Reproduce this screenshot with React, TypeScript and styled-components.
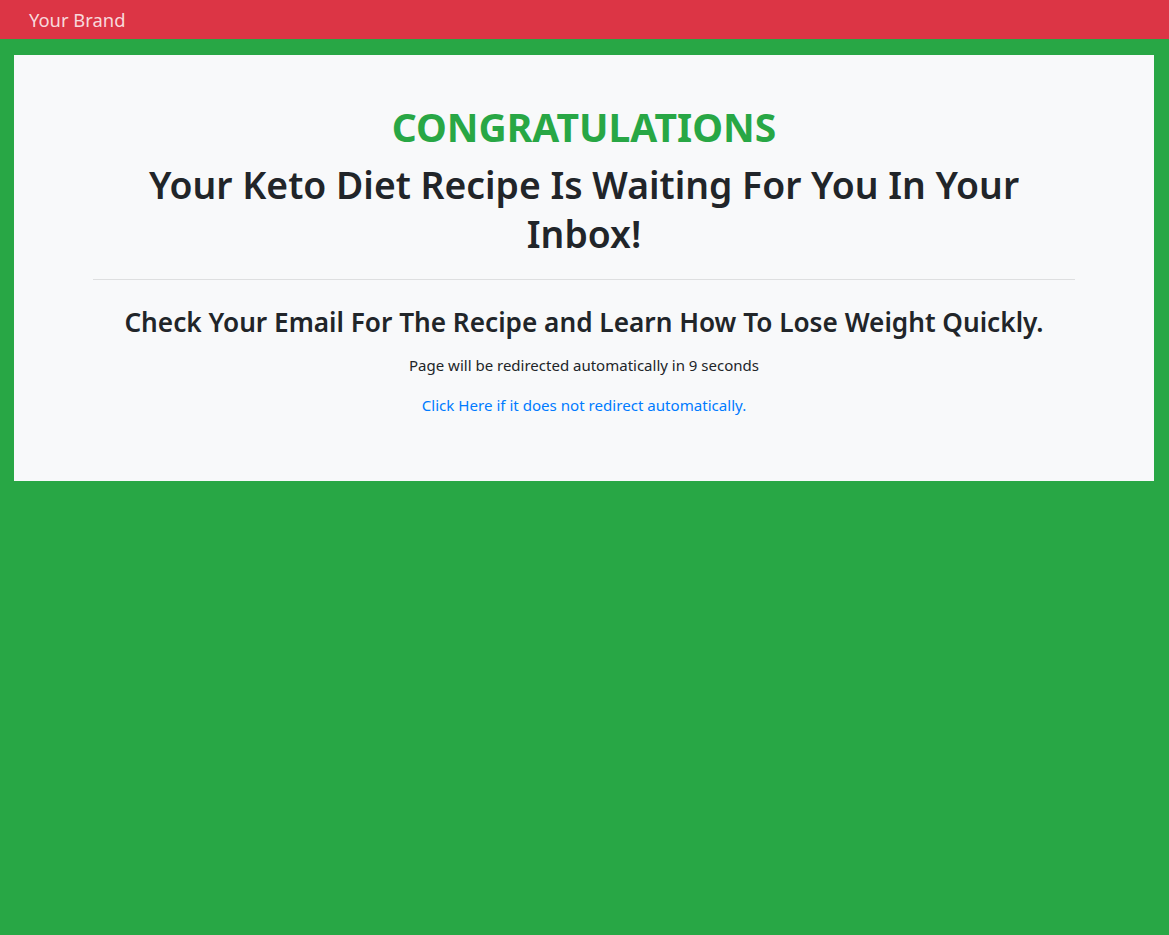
import React from "react";
import styled, { createGlobalStyle } from "styled-components";

const Global = createGlobalStyle`
  html, body { margin: 0; padding: 0; }
  body {
    background: #28a745;
    font-family: "Noto Sans", "Open Sans", sans-serif;
    color: #212529;
    min-height: 935px;
  }
  * { box-sizing: border-box; }
`;

const Navbar = styled.nav`
  height: 39px;
  background: #dc3545;
  display: flex;
  align-items: center;
  padding: 0 29px;
`;

const Brand = styled.a`
  color: rgba(255, 255, 255, 0.82);
  font-size: 18.4px;
  line-height: 1;
  text-decoration: none;
  margin-top: 1px;
`;

const Main = styled.main`
  padding: 16px 15px 0 14px;
`;

const Card = styled.section`
  background: #f8f9fa;
  height: 426px;
  padding: 48px 79px 0;
  display: flex;
  flex-direction: column;
  align-items: center;
  text-align: center;
`;

const Title = styled.h1<{ $accent?: boolean }>`
  margin: 0 0 9px;
  font-size: ${(p) => (p.$accent ? "39px" : "37.3px")};
  line-height: ${(p) => (p.$accent ? "48px" : "49px")};
  font-weight: ${(p) => (p.$accent ? 700 : 600)};
  color: ${(p) => (p.$accent ? "#28a745" : "#212529")};
`;

const Rule = styled.hr`
  align-self: stretch;
  border: 0;
  border-top: 1px solid rgba(0, 0, 0, 0.1);
  margin: 12px 0 25px;
`;

const Subtitle = styled.h3`
  margin: 0 0 14px;
  font-size: 26.2px;
  line-height: 34px;
  font-weight: 600;
`;

const Note = styled.p`
  margin: 0 0 16px;
  font-size: 15px;
  line-height: 24px;
`;

const Link = styled.a`
  color: #007bff;
  font-size: 15.1px;
  line-height: 24px;
  text-decoration: none;
`;

export default function App() {
  return (
    <>
      <Global />
      <Navbar>
        <Brand href="#">Your Brand</Brand>
      </Navbar>
      <Main>
        <Card>
          <Title $accent>CONGRATULATIONS</Title>
          <Title>Your Keto Diet Recipe Is Waiting For You In Your Inbox!</Title>
          <Rule />
          <Subtitle>Check Your Email For The Recipe and Learn How To Lose Weight Quickly.</Subtitle>
          <Note>Page will be redirected automatically in 9 seconds</Note>
          <Link href="#">Click Here if it does not redirect automatically.</Link>
        </Card>
      </Main>
    </>
  );
}
